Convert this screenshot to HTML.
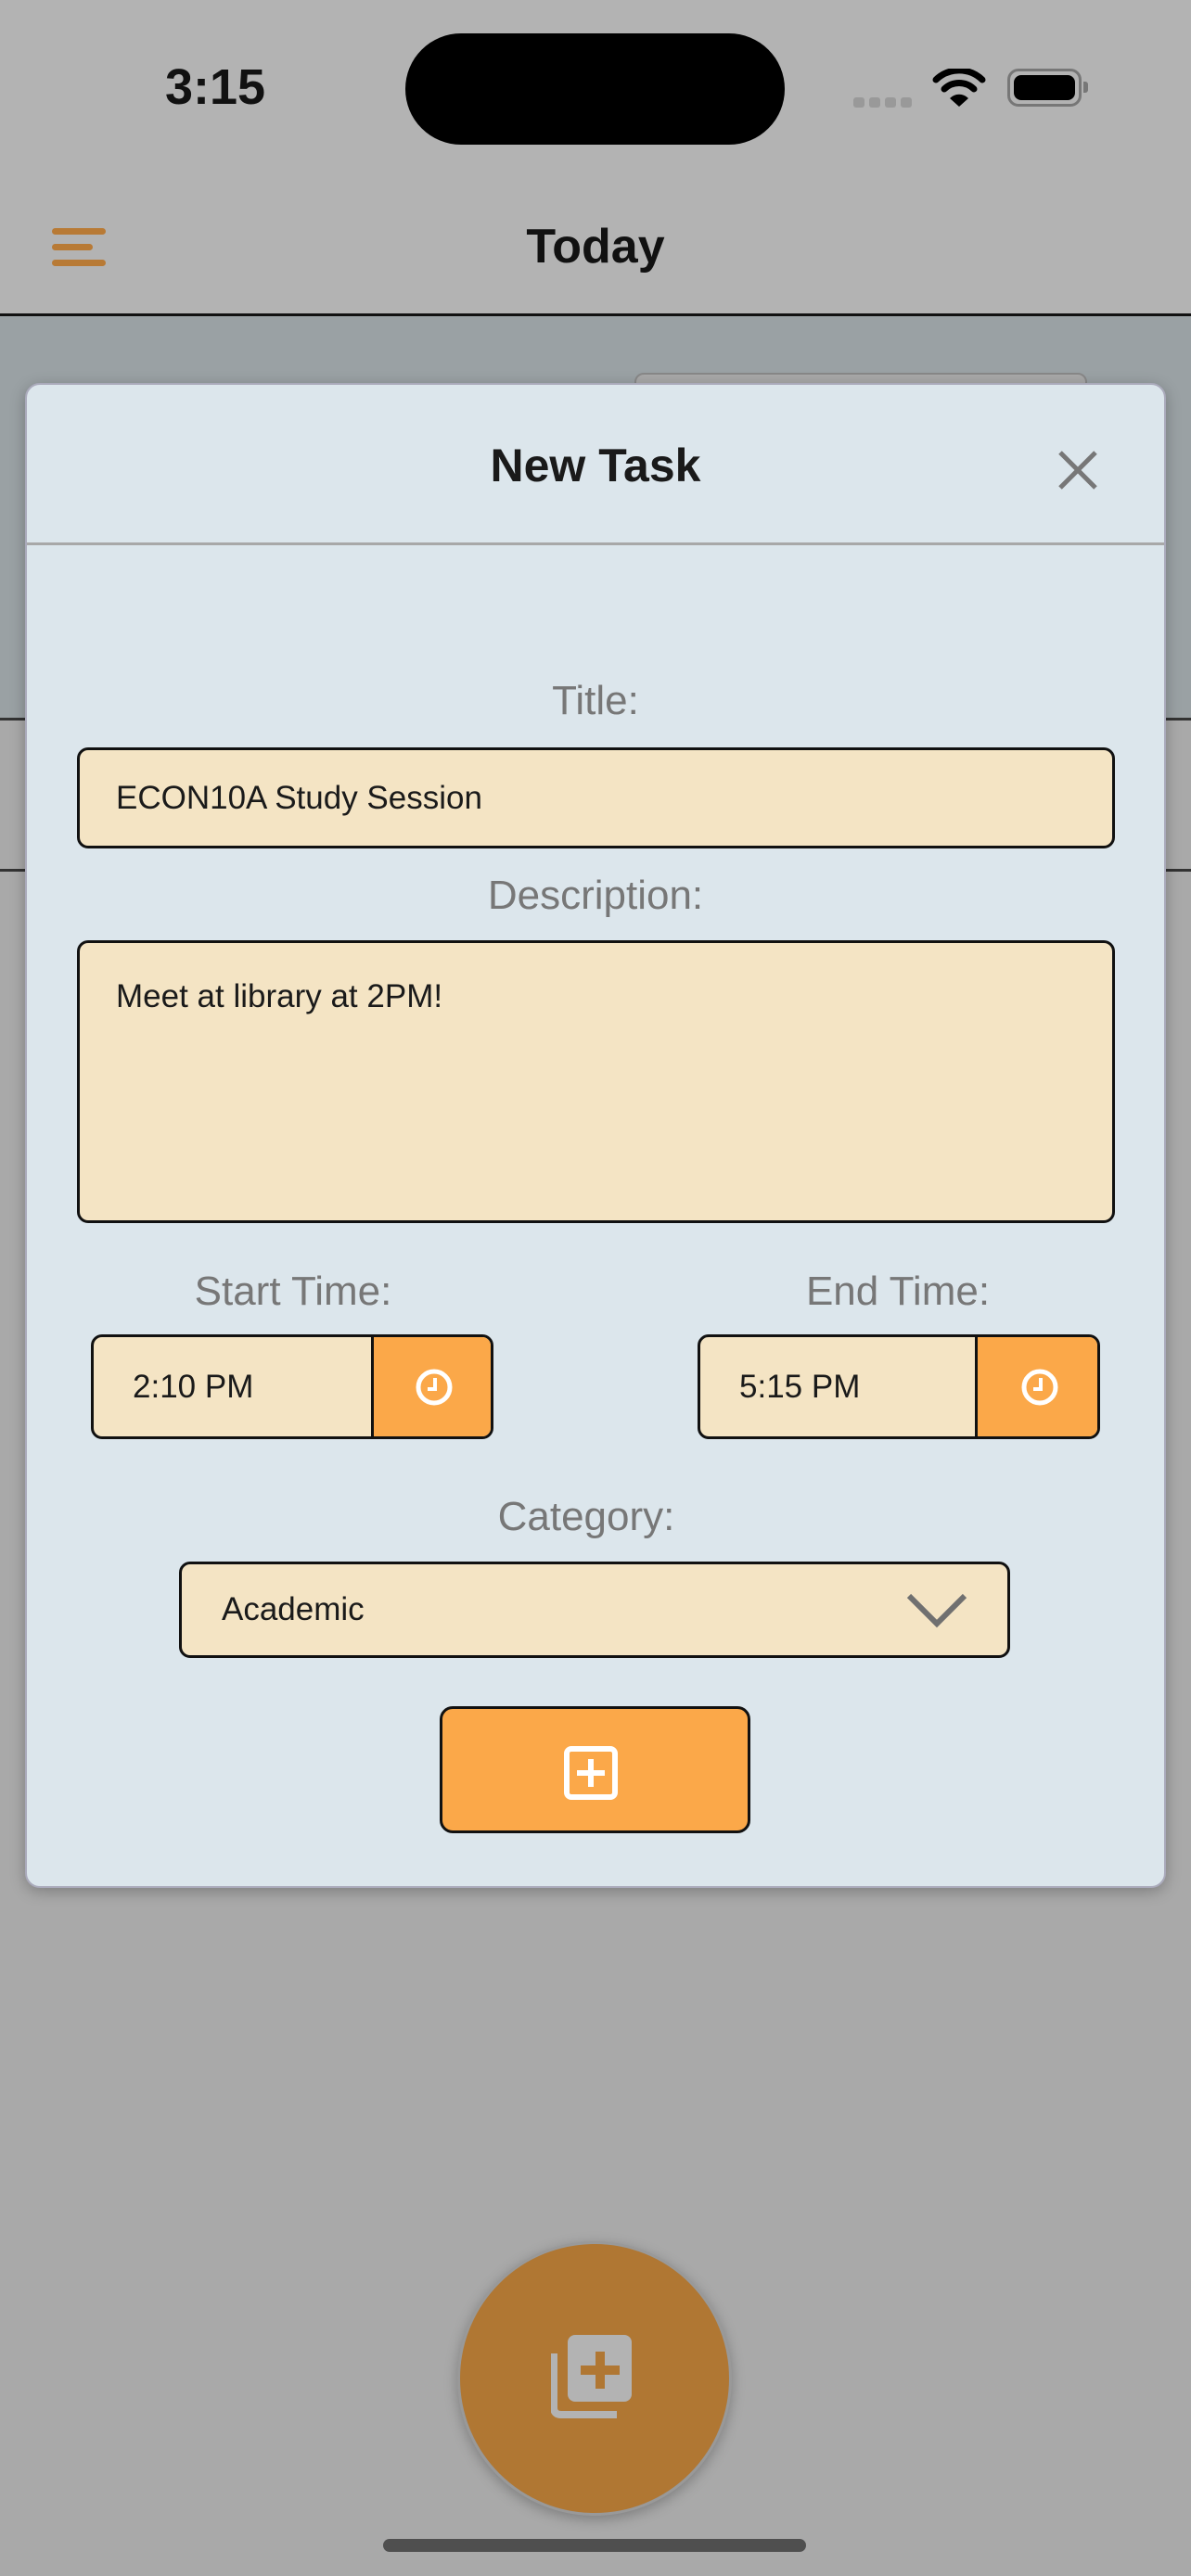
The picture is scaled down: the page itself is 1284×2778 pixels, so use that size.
<!DOCTYPE html>
<html><head><meta charset="utf-8"><style>
*{margin:0;padding:0;box-sizing:border-box}
body{width:1284px;height:2778px;position:relative;overflow:hidden;background:#a9a9a9;font-family:"Liberation Sans",sans-serif}
.a{position:absolute}
.lbl{position:absolute;color:#777;font-size:44px;text-align:center;transform:translateX(-50%);white-space:nowrap;line-height:1}
.inp{position:absolute;background:#f4e4c4;border:3px solid #111;border-radius:12px;color:#1a1a1a;font-size:35px}
</style></head><body>
<div class="a" style="left:0;top:0;width:1284px;height:339px;background:#b3b3b3"></div>
<div class="a" style="left:178px;top:64px;font-size:54px;font-weight:bold;color:#111;line-height:60px">3:15</div>
<div class="a" style="left:437px;top:36px;width:409px;height:120px;border-radius:60px;background:#000"></div>
<div class="a" style="left:920px;top:105px;width:12px;height:11px;border-radius:3px;background:#999"></div>
<div class="a" style="left:937px;top:105px;width:12px;height:11px;border-radius:3px;background:#999"></div>
<div class="a" style="left:954px;top:105px;width:12px;height:11px;border-radius:3px;background:#999"></div>
<div class="a" style="left:971px;top:105px;width:12px;height:11px;border-radius:3px;background:#999"></div>
<svg class="a" style="left:1005px;top:74px" width="58" height="42" viewBox="0 0 58 42"><path d="M4 12 A36 36 0 0 1 54 12" stroke="#000" stroke-width="7" fill="none" stroke-linecap="round"/><path d="M13 22 A23 23 0 0 1 45 22" stroke="#000" stroke-width="7" fill="none" stroke-linecap="round"/><path d="M19 32 L29 41 L39 32 A14 14 0 0 0 19 32Z" fill="#000"/></svg>
<div class="a" style="left:1086px;top:74px;width:80px;height:41px;border:3px solid #777;border-radius:12px;padding:4px"><div style="width:100%;height:100%;background:#000;border-radius:8px"></div></div>
<div class="a" style="left:1168px;top:88px;width:5px;height:12px;background:#777;border-radius:0 3px 3px 0"></div>
<div class="a" style="left:56px;top:246px;width:58px;height:7px;border-radius:4px;background:#b87a35"></div>
<div class="a" style="left:56px;top:263px;width:44px;height:7px;border-radius:4px;background:#b87a35"></div>
<div class="a" style="left:56px;top:280px;width:58px;height:7px;border-radius:4px;background:#b87a35"></div>
<div class="a" style="left:0;top:236px;width:1284px;text-align:center;font-size:52px;font-weight:bold;color:#111;line-height:60px">Today</div>
<div class="a" style="left:0;top:338px;width:1284px;height:3px;background:#111"></div>
<div class="a" style="left:0;top:341px;width:1284px;height:434px;background:#9aa1a4"></div>
<div class="a" style="left:0;top:774px;width:1284px;height:3px;background:#333"></div>
<div class="a" style="left:0;top:937px;width:1284px;height:3px;background:#333"></div>
<div class="a" style="left:684px;top:402px;width:488px;height:40px;background:#a8a8a8;border:2px solid #888;border-radius:10px"></div>
<div class="a" style="left:27px;top:413px;width:1230px;height:1623px;background:#dce6ec;border:2px solid #aab;border-radius:16px;box-shadow:0 4px 16px rgba(0,0,0,.25)"></div>
<div class="a" style="left:27px;top:474px;width:1230px;text-align:center;font-size:50px;font-weight:bold;color:#1a1a1a;line-height:56px">New Task</div>
<svg class="a" style="left:1140px;top:485px" width="44" height="44"><path d="M3 3L41 41M41 3L3 41" stroke="#777" stroke-width="5"/></svg>
<div class="a" style="left:29px;top:585px;width:1226px;height:3px;background:#a8a8a8"></div>
<div class="lbl" style="left:642px;top:734px">Title:</div>
<div class="inp" style="left:83px;top:806px;width:1119px;height:109px;padding-left:39px;line-height:103px">ECON10A Study Session</div>
<div class="lbl" style="left:642px;top:944px">Description:</div>
<div class="inp" style="left:83px;top:1014px;width:1119px;height:305px;padding:38px 0 0 39px;line-height:40px">Meet at library at 2PM!</div>
<div class="lbl" style="left:316px;top:1371px">Start Time:</div>
<div class="lbl" style="left:968px;top:1371px">End Time:</div>
<div class="inp" style="left:98px;top:1439px;width:434px;height:113px;padding-left:42px;line-height:107px;overflow:hidden">2:10 PM<div class="a" style="left:299px;top:0;width:130px;height:107px;background:#fba849;border-left:3px solid #111"><svg style="position:absolute;left:44px;top:33px" width="42" height="42"><circle cx="21" cy="21" r="17" stroke="#fff" stroke-width="5" fill="none"/><path d="M22 11V23H14" stroke="#fff" stroke-width="4" fill="none"/></svg></div></div>
<div class="inp" style="left:752px;top:1439px;width:434px;height:113px;padding-left:42px;line-height:107px;overflow:hidden">5:15 PM<div class="a" style="left:296px;top:0;width:135px;height:107px;background:#fba849;border-left:3px solid #111"><svg style="position:absolute;left:46px;top:33px" width="42" height="42"><circle cx="21" cy="21" r="17" stroke="#fff" stroke-width="5" fill="none"/><path d="M22 11V23H14" stroke="#fff" stroke-width="4" fill="none"/></svg></div></div>
<div class="lbl" style="left:632px;top:1614px">Category:</div>
<div class="inp" style="left:193px;top:1684px;width:896px;height:104px;padding-left:43px;line-height:98px">Academic<svg class="a" style="left:780px;top:30px" width="68" height="40"><path d="M4 4L34 34L64 4" stroke="#707070" stroke-width="6" fill="none"/></svg></div>
<div class="a" style="left:474px;top:1840px;width:335px;height:137px;background:#fba849;border:3px solid #111;border-radius:14px"></div>
<svg class="a" style="left:607px;top:1882px" width="60" height="60"><rect x="4" y="4" width="52" height="52" rx="5" stroke="#fff" stroke-width="6" fill="none"/><path d="M30 15V45M15 30H45" stroke="#fff" stroke-width="6"/></svg>
<div class="a" style="left:493px;top:2417px;width:296px;height:296px;border-radius:50%;background:#b07733;border:3px solid #999;box-shadow:0 4px 14px rgba(0,0,0,.25)"></div>
<svg class="a" style="left:594px;top:2518px" width="92" height="92"><path d="M3 20V78Q3 86 11 86H71" stroke="#b3b3b3" stroke-width="8" fill="none"/><rect x="18" y="0" width="69" height="72" rx="8" fill="#b3b3b3"/><path d="M53 18V58M32 38H74" stroke="#b07733" stroke-width="10"/></svg>
<div class="a" style="left:413px;top:2738px;width:456px;height:14px;border-radius:7px;background:#4f4f4f"></div>
</body></html>
